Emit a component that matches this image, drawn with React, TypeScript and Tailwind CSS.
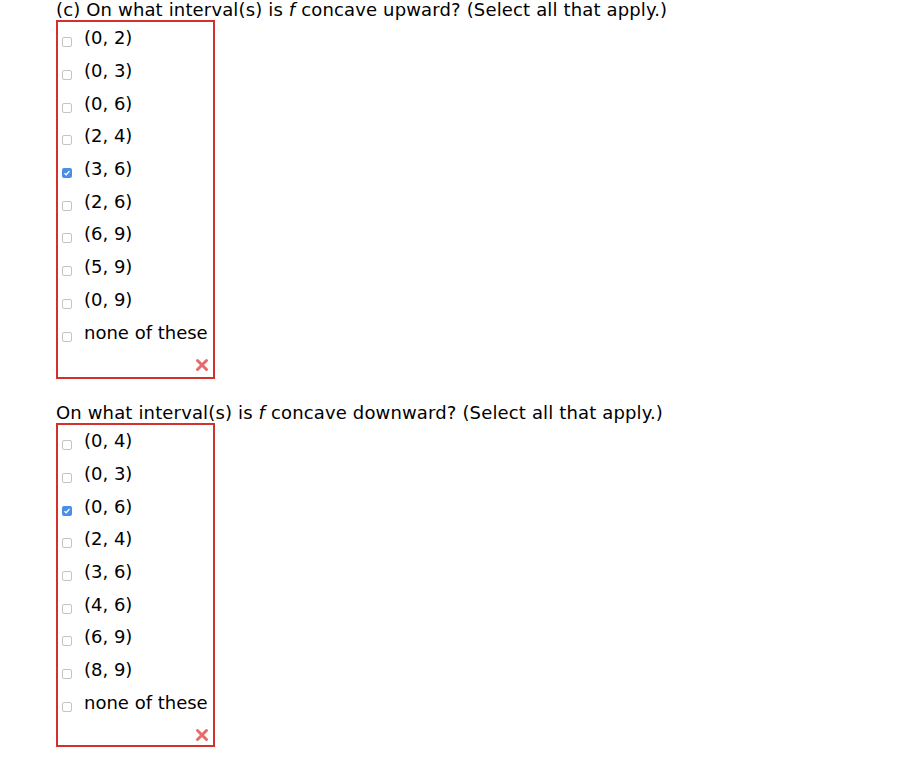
import React from "react";

const q1 = [
  { l: "(0, 2)", c: false },
  { l: "(0, 3)", c: false },
  { l: "(0, 6)", c: false },
  { l: "(2, 4)", c: false },
  { l: "(3, 6)", c: true },
  { l: "(2, 6)", c: false },
  { l: "(6, 9)", c: false },
  { l: "(5, 9)", c: false },
  { l: "(0, 9)", c: false },
  { l: "none of these", c: false },
];
const q2 = [
  { l: "(0, 4)", c: false },
  { l: "(0, 3)", c: false },
  { l: "(0, 6)", c: true },
  { l: "(2, 4)", c: false },
  { l: "(3, 6)", c: false },
  { l: "(4, 6)", c: false },
  { l: "(6, 9)", c: false },
  { l: "(8, 9)", c: false },
  { l: "none of these", c: false },
];

function Box({ checked }: { checked: boolean }) {
  if (checked)
    return (
      <span className="mt-[8px] flex h-[10px] w-[10px] items-center justify-center rounded-[2px] bg-[#4a8ee6]">
        <svg width="8" height="8" viewBox="0 0 8 8">
          <path d="M1.5 4.2 L3.2 5.8 L6.5 2" stroke="white" strokeWidth="1.3" fill="none" />
        </svg>
      </span>
    );
  return <span className="mt-[8px] block h-[10px] w-[10px] rounded-[2px] border border-[#c4c4c4] bg-white" />;
}

function List({ items, tail }: { items: { l: string; c: boolean }[]; tail: "a" | "b" }) {
  return (
    <div className="ml-[56px] w-[159px] border-2 border-[#d2322d]">
      {items.map((it, i) => (
        <div key={i} className="flex h-[32.7px] items-center">
          <div className="ml-[4px] w-[22px] flex justify-start items-center">
            <Box checked={it.c} />
          </div>
          <span>{it.l}</span>
        </div>
      ))}
      <div className={tail === "a" ? "flex h-[28px] justify-end pr-[4px] pt-[9px]" : "flex h-[26px] justify-end pr-[4px] pt-[9px]"}>
        <svg width="14" height="14" viewBox="0 0 14 14">
          <path d="M2.5 2.5 L11.5 11.5 M11.5 2.5 L2.5 11.5" stroke="#e86a6a" strokeWidth="3" strokeLinecap="round" />
        </svg>
      </div>
    </div>
  );
}

export default function App() {
  return (
    <div
      className="bg-white text-[18px] leading-[20px] text-black"
      style={{ fontFamily: '"DejaVu Sans", Verdana, sans-serif', width: 900, height: 762 }}
    >
      <div className="ml-[56px] tracking-[0.15px]">
        (c) On what interval(s) is <i>f</i> concave upward? (Select all that apply.)
      </div>
      <List items={q1} tail="a" />
      <div className="ml-[56px] mt-[24px] tracking-[0.15px]">
        On what interval(s) is <i>f</i> concave downward? (Select all that apply.)
      </div>
      <List items={q2} tail="b" />
    </div>
  );
}
